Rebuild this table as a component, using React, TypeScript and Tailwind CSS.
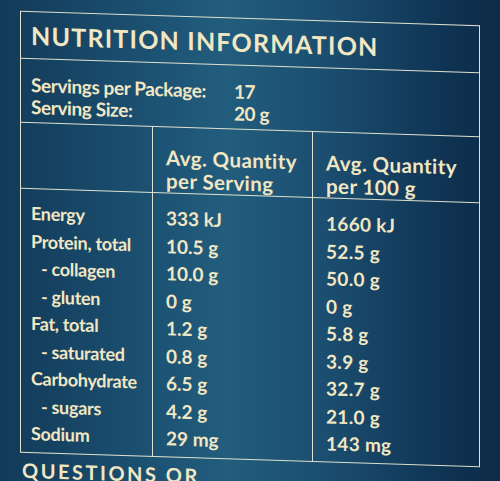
import React from "react";

const rows: [string, string, string, boolean][] = [
  ["Energy", "333 kJ", "1660 kJ", false],
  ["Protein, total", "10.5 g", "52.5 g", false],
  ["- collagen", "10.0 g", "50.0 g", true],
  ["- gluten", "0 g", "0 g", true],
  ["Fat, total", "1.2 g", "5.8 g", false],
  ["- saturated", "0.8 g", "3.9 g", true],
  ["Carbohydrate", "6.5 g", "32.7 g", false],
  ["- sugars", "4.2 g", "21.0 g", true],
  ["Sodium", "29 mg", "143 mg", false],
];

export default function App() {
  return (
    <div
      className="relative w-[500px] h-[481px] overflow-hidden text-[#f2e7c3] bg-[linear-gradient(90deg,#123a58_0%,#1a4d6e_25%,#225d7e_45%,#1b4e70_65%,#0f3252_90%,#0c2b47_100%)]"
      style={{ fontFamily: "Lato, 'Open Sans', sans-serif" }}
    >
      <div className="pt-[18px] pl-[20px] skew-y-[1.8deg]">
        <div className="w-[460px] border-[1.5px] border-[#dfe2cf]">
          <div className="h-[47px] pl-[10px] flex items-center border-b-[1.5px] border-[#dfe2cf]">
            <span className="text-[25px] font-bold tracking-[1.2px] leading-none">NUTRITION INFORMATION</span>
          </div>
          <div className="h-[64px] pl-[10px] pt-[15px] border-b-[1.5px] border-[#dfe2cf] text-[19px] font-bold leading-[22px] tracking-[-0.4px]">
            <div className="flex">
              <span className="w-[203px]">Servings per Package:</span>
              <span>17</span>
            </div>
            <div className="flex">
              <span className="w-[203px]">Serving Size:</span>
              <span>20 g</span>
            </div>
          </div>
          <div className="grid grid-cols-[132px_160px_1fr] text-[19px] font-bold">
            <div className="h-[66px] border-r-[1.5px] border-b-[1.5px] border-[#dfe2cf]" />
            <div className="h-[66px] pl-[13px] pt-[19px] text-[20.5px] tracking-[0.4px] leading-[23px] border-r-[1.5px] border-b-[1.5px] border-[#dfe2cf] whitespace-nowrap">
              <div>Avg. Quantity</div>
              <div>per Serving</div>
            </div>
            <div className="h-[66px] pl-[13px] pt-[19px] text-[20.5px] tracking-[0.4px] leading-[23px] border-b-[1.5px] border-[#dfe2cf] whitespace-nowrap">
              <div>Avg. Quantity</div>
              <div>per 100 g</div>
            </div>
            <div className="pt-[11px] pb-[4px] pl-[10px] border-r-[1.5px] border-[#dfe2cf] text-[18px] tracking-[-0.3px]">
              {rows.map((r) => (
                <div key={r[0]} className={`h-[27.5px] leading-[27.5px] whitespace-nowrap ${r[3] ? "pl-[10px]" : ""}`}>
                  {r[0]}
                </div>
              ))}
            </div>
            <div className="pt-[11px] pb-[4px] pl-[13px] border-r-[1.5px] border-[#dfe2cf]">
              {rows.map((r) => (
                <div key={r[0]} className="h-[27.5px] leading-[27.5px]">
                  {r[1]}
                </div>
              ))}
            </div>
            <div className="pt-[11px] pb-[4px] pl-[13px] tracking-[0.3px]">
              {rows.map((r) => (
                <div key={r[0]} className="h-[27.5px] leading-[27.5px]">
                  {r[2]}
                </div>
              ))}
            </div>
          </div>
        </div>
        <div className="pl-[2px] pt-[2px] text-[20px] font-bold tracking-[2.5px]">QUESTIONS OR</div>
      </div>
    </div>
  );
}
